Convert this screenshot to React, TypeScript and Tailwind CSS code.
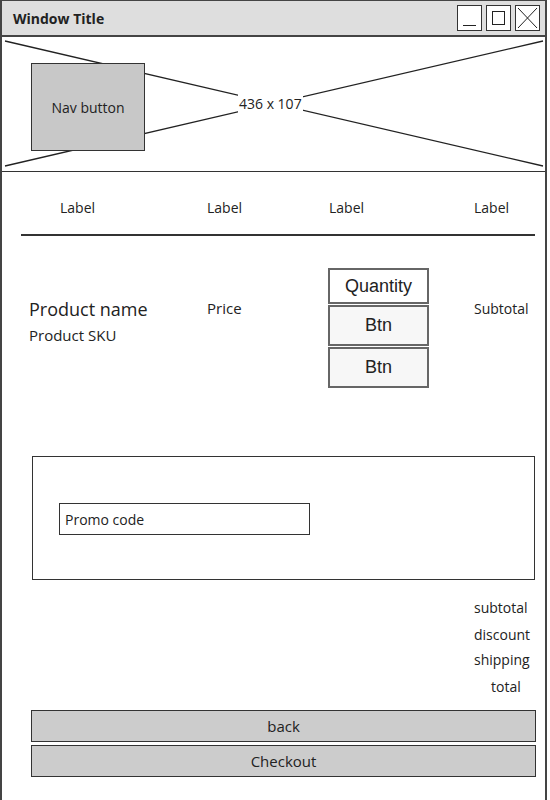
import React from 'react';

const font = { fontFamily: '"Open Sans", "Liberation Sans", sans-serif' };

function TitleButton({ children }: { children: React.ReactNode }) {
    return (
        <div className="w-[25px] h-[26px] border border-[#333] bg-white flex items-center justify-center">
            <svg width="23" height="24" viewBox="0 0 23 24" fill="none" stroke="#222" strokeWidth="1">
                {children}
            </svg>
        </div>
    );
}

function CartLine() {
    return (
        <div className="flex items-start mt-[32px] pl-[27px] text-[#222]">
            <div className="w-[178px] flex flex-col">
                <span className="mt-[29px] text-[18px] leading-[24px]">Product name</span>
                <span className="mt-[4px] text-[15px] leading-[20px]">Product SKU</span>
            </div>
            <div className="w-[121px]">
                <span className="block mt-[30px] text-[15px] leading-[20px]">Price</span>
            </div>
            <div className="w-[146px]">
                <div className="w-[101px] flex flex-col" style={{ fontFamily: '"Liberation Sans", Arial, sans-serif' }}>
                    <div className="h-[36px] border-2 border-[#666] bg-white flex items-center justify-center text-[18px]">Quantity</div>
                    <button className="mt-[1px] h-[41px] border-2 border-[#666] bg-[#f7f7f7] text-[18px]">Btn</button>
                    <button className="mt-[1px] h-[41px] border-2 border-[#666] bg-[#f7f7f7] text-[18px]">Btn</button>
                </div>
            </div>
            <span className="mt-[31px] text-[14px] leading-[20px]">Subtotal</span>
        </div>
    );
}

export default function App() {
    return (
        <div className="w-[547px] h-[800px] border-x-2 border-t border-[#444] bg-white flex flex-col text-[#222]" style={font}>
            {/* title bar */}
            <div className="h-[36px] bg-[#dedede] border-b-2 border-[#444] flex items-center justify-between pl-[11px] pr-[5px]">
                <span className="text-[14px] font-bold">Window Title</span>
                <div className="flex gap-[4px]">
                    <TitleButton>
                        <line x1="5" y1="19.5" x2="18" y2="19.5" />
                    </TitleButton>
                    <TitleButton>
                        <rect x="5.5" y="5.5" width="12" height="13" />
                    </TitleButton>
                    <TitleButton>
                        <line x1="2" y1="2" x2="21" y2="22" />
                        <line x1="21" y1="2" x2="2" y2="22" />
                    </TitleButton>
                </div>
            </div>

            {/* image placeholder */}
            <div className="relative h-[135px] border-b border-[#333] pl-[29px] pt-[26px]">
                <svg className="absolute inset-0" width="543" height="134" viewBox="0 0 543 134" fill="none" stroke="#222" strokeWidth="1.3">
                    <line x1="3" y1="4" x2="541" y2="129" />
                    <line x1="3" y1="129" x2="541" y2="4" />
                </svg>
                <span className="absolute left-[236px] top-[57px] bg-white px-[1px] text-[14px] leading-[20px]">436 x 107</span>
                <button className="relative w-[114px] h-[88px] bg-[#c8c8c8] border border-[#333] text-[14px]">Nav button</button>
            </div>

            {/* column labels */}
            <div className="flex mt-[26px] pl-[58px] text-[14px] leading-[20px]">
                <span className="w-[147px]">Label</span>
                <span className="w-[122px]">Label</span>
                <span className="w-[145px]">Label</span>
                <span>Label</span>
            </div>
            <div className="mt-[16px] ml-[19px] w-[514px] h-[2px] bg-[#333]" />

            <CartLine />

            {/* promo */}
            <div className="mt-[68px] ml-[30px] w-[503px] h-[124px] border border-[#333] pl-[26px] pt-[46px]">
                <div className="w-[251px] h-[32px] border border-[#333] flex items-center pl-[5px] text-[14px]">Promo code</div>
            </div>

            {/* totals */}
            <div className="flex flex-col text-[14px] leading-[20px]">
                <span className="mt-[18px] pl-[472px]">subtotal</span>
                <span className="mt-[7px] pl-[472px]">discount</span>
                <span className="mt-[5px] pl-[472px]">shipping</span>
                <span className="mt-[7px] pl-[489px]">total</span>
            </div>

            <button className="mt-[13px] ml-[29px] w-[505px] h-[32px] bg-[#cccccc] border border-[#333] text-[15px]">back</button>
            <button className="mt-[3px] ml-[29px] w-[505px] h-[32px] bg-[#cccccc] border border-[#333] text-[15px]">Checkout</button>
        </div>
    );
}
